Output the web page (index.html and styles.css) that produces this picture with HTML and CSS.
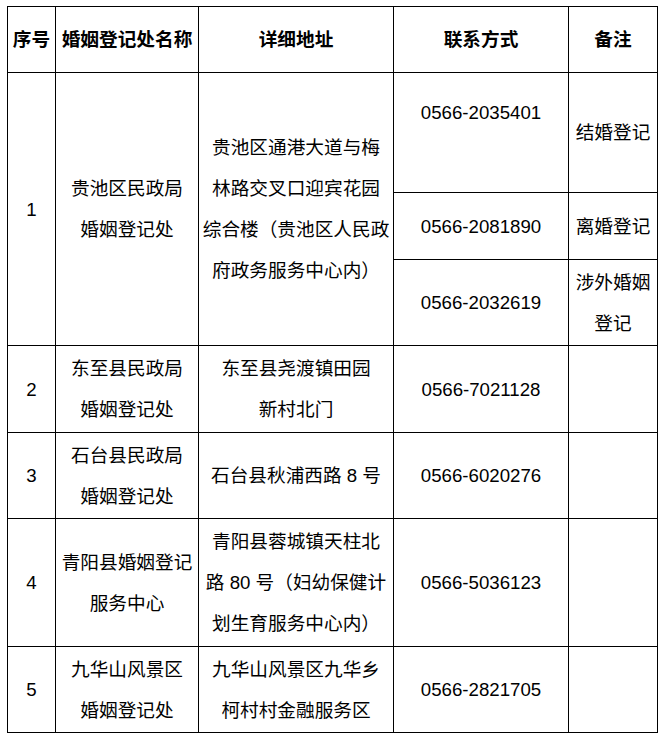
FILE: index.html
```html
<!DOCTYPE html>
<html lang="zh-CN">
<head>
<meta charset="utf-8">
<title>婚姻登记处</title>
<link rel="stylesheet" href="styles.css">
</head>
<body>
<table class="reg">
  <colgroup>
    <col class="c-no">
    <col class="c-name">
    <col class="c-addr">
    <col class="c-tel">
    <col class="c-note">
  </colgroup>
  <thead>
    <tr class="r-head">
      <th>序号</th>
      <th>婚姻登记处名称</th>
      <th>详细地址</th>
      <th>联系方式</th>
      <th>备注</th>
    </tr>
  </thead>
  <tbody>
    <tr class="r-1a">
      <td rowspan="3">1</td>
      <td rowspan="3">贵池区民政局<br>婚姻登记处</td>
      <td rowspan="3">贵池区通港大道与梅<br>林路交叉口迎宾花园<br>综合楼（贵池区人民政<br>府政务服务中心内）</td>
      <td>0566-2035401<br>&nbsp;</td>
      <td>结婚登记</td>
    </tr>
    <tr class="r-1b">
      <td>0566-2081890</td>
      <td>离婚登记</td>
    </tr>
    <tr class="r-1c">
      <td>0566-2032619</td>
      <td>涉外婚姻<br>登记</td>
    </tr>
    <tr class="r-2">
      <td>2</td>
      <td>东至县民政局<br>婚姻登记处</td>
      <td>东至县尧渡镇田园<br>新村北门</td>
      <td>0566-7021128</td>
      <td></td>
    </tr>
    <tr class="r-3">
      <td>3</td>
      <td>石台县民政局<br>婚姻登记处</td>
      <td>石台县秋浦西路 8 号</td>
      <td>0566-6020276</td>
      <td></td>
    </tr>
    <tr class="r-4">
      <td>4</td>
      <td>青阳县婚姻登记<br>服务中心</td>
      <td>青阳县蓉城镇天柱北<br>路 80 号（妇幼保健计<br>划生育服务中心内）</td>
      <td>0566-5036123</td>
      <td></td>
    </tr>
    <tr class="r-5">
      <td>5</td>
      <td>九华山风景区<br>婚姻登记处</td>
      <td>九华山风景区九华乡<br>柯村村金融服务区</td>
      <td>0566-2821705</td>
      <td></td>
    </tr>
  </tbody>
</table>
</body>
</html>
```
FILE: styles.css
```css
html, body {
  margin: 0;
  padding: 0;
  background: #ffffff;
}

body {
  padding: 6px 0 0 7px;
  font-family: "Liberation Sans", "Noto Sans CJK SC", sans-serif;
  font-size: 18.67px;
  color: #000000;
}

.reg {
  border-collapse: collapse;
  table-layout: fixed;
  width: 651px;
}

.c-no { width: 48px; }
.c-name { width: 143px; }
.c-addr { width: 195px; }
.c-tel { width: 175px; }
.c-note { width: 89px; }

.reg th,
.reg td {
  border: 1px solid #000000;
  padding: 0;
  text-align: center;
  vertical-align: middle;
  line-height: 41px;
  white-space: nowrap;
  overflow: hidden;
}

.reg th {
  font-weight: 700;
}

.r-head { height: 66px; }
.r-1a { height: 120px; }
.r-1b { height: 67px; }
.r-1c { height: 86px; }
.r-2 { height: 87px; }
.r-3 { height: 86px; }
.r-4 { height: 128px; }
.r-5 { height: 86px; }
```
